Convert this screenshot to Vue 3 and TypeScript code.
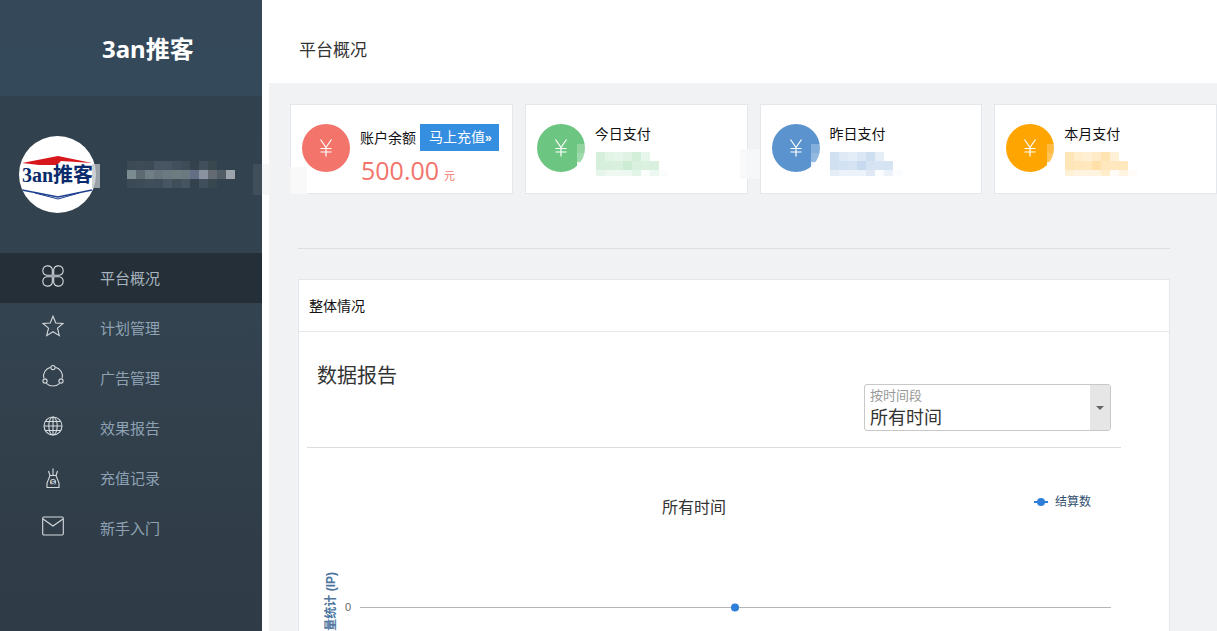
<script setup lang="ts">
interface Cell {
  x: number;
  y: number;
  w: number;
  h: number;
  color: string;
}

interface StatCard {
  label: string;
  color: string;
  amount?: string;
}

const navItems = ['平台概况', '计划管理', '广告管理', '效果报告', '充值记录', '新手入门'];

const cards: StatCard[] = [
  { label: '账户余额', color: '#f2746b', amount: '500.00' },
  { label: '今日支付', color: '#6cc681' },
  { label: '昨日支付', color: '#5b93cf' },
  { label: '本月支付', color: '#ffa502' }
];

// 打码区域：按页面坐标铺马赛克
const CELL = 9;
const pattern = [
  [0.28, 0.2, 0.17, 0.22, 0.3, 0.16],
  [0.28, 0.27, 0.26, 0.34, 0.26, 0.25, 0.26],
  [0.16, 0.12, 0.12, 0.12, 0.2, 0.03, 0.12, 0.03]
];

function blur(left: number, top: number, rgb: string): Cell[] {
  const out: Cell[] = [];
  pattern.forEach((row, r) => {
    row.forEach((a, c) => {
      out.push({
        x: left + c * CELL,
        y: top + r * CELL,
        w: CELL,
        h: r === 2 ? 6 : CELL,
        color: `rgba(${rgb},${a})`
      });
    });
  });
  return out;
}

function edge(left: number): Cell[] {
  return [
    { x: left, y: 144, w: 9, h: 9, color: 'rgba(255,255,255,0.25)' },
    { x: left, y: 153, w: 9, h: 9, color: 'rgba(255,255,255,0.35)' },
    { x: left, y: 162, w: 9, h: 9, color: 'rgba(255,255,255,0.88)' }
  ];
}

const nameRows = [
  ['#3b4a55', '#3e4c58', '#3c4a56', '#475562', '#475562', '#424f5c', '#3e4c58', '#34424e', '#414f5c', '#39474f'],
  ['#7a8c90', '#5e6a72', '#6f7d85', '#68757f', '#6a7a80', '#6e7c80', '#6a7a80', '#646f85', '#8b929f', '#646a72', '#515c66', '#9ea4ab'],
  ['#3b4a55', '#3e4c58', '#414f5a', '#3f4d5a', '#475662', '#404e5a', '#46545f', '#34424e', '#414f5c', '#39474f']
];

const nameCells: Cell[] = nameRows.flatMap((row, r) =>
  row.map((color, c) => ({ x: 127 + c * CELL, y: 161 + r * CELL, w: CELL, h: CELL, color }))
);

const cells: Cell[] = [
  ...nameCells,
  { x: 92, y: 164, w: 8, h: 24, color: 'rgba(190,195,198,0.75)' },
  { x: 253, y: 164, w: 9, h: 31, color: 'rgba(255,255,255,0.07)' },
  { x: 262, y: 164, w: 8, h: 31, color: 'rgba(245,245,245,0.9)' },
  { x: 290, y: 167, w: 17, h: 27, color: 'rgba(248,248,248,0.9)' },
  { x: 740, y: 149, w: 8, h: 30, color: 'rgba(248,248,248,0.9)' },
  { x: 748, y: 149, w: 12, h: 30, color: 'rgba(250,250,250,0.6)' },
  ...edge(577),
  ...blur(596, 152, '108,198,129'),
  ...edge(811),
  ...blur(830, 152, '91,147,207'),
  ...edge(1047),
  ...blur(1065, 152, '255,165,2')
];
</script>

<template>
  <div class="page">
    <aside class="sidebar">
      <div class="brand">3an推客</div>
      <div class="profile">
        <div class="avatar">
          <svg width="77" height="77" viewBox="0 0 77 77">
            <path d="M3 27 L39 20 L73 27 L42 25 L38 29 L20 29 Z" fill="#d8171c" />
            <text x="3" y="46" class="logo-text">3an推客</text>
            <path d="M3 54 L39 61 L73 54" fill="none" stroke="#1d3f8f" stroke-width="1.4" />
            <path d="M16 57 L39 63 L60 57" fill="none" stroke="#1d3f8f" stroke-width="1" />
          </svg>
        </div>
      </div>
      <nav>
        <a v-for="(item, i) in navItems" :key="item" class="nav-item" :class="{ active: i === 0 }">
          <svg class="nav-icon" width="22" height="22" viewBox="0 0 22 22">
            <g v-if="i === 0">
              <path d="M10.3 10.3H4.5A4.8 4.8 0 1 1 10.3 4.5Z" />
              <path d="M11.7 10.3H17.5A4.8 4.8 0 1 0 11.7 4.5Z" />
              <path d="M10.3 11.7H4.5A4.8 4.8 0 1 0 10.3 17.5Z" />
              <path d="M11.7 11.7H17.5A4.8 4.8 0 1 1 11.7 17.5Z" />
            </g>
            <path v-else-if="i === 1" d="M11 1.2 L13.8 8 L21 8.5 L15.5 13.2 L17.3 20.6 L11 16.7 L4.7 20.6 L6.5 13.2 L1 8.5 L8.2 8Z" />
            <g v-else-if="i === 2">
              <path d="M13.4 2.2A9.3 9.3 0 0 1 20.2 13.2M17.6 18.3A9.3 9.3 0 0 1 4.4 18.3M1.8 13.2A9.3 9.3 0 0 1 8.6 2.2" />
              <circle cx="11" cy="2.6" r="2.1" />
              <circle cx="3" cy="16" r="2.1" />
              <circle cx="19" cy="16" r="2.1" />
            </g>
            <g v-else-if="i === 3">
              <circle cx="11" cy="11" r="9" />
              <ellipse cx="11" cy="11" rx="4.2" ry="9" />
              <path d="M11 2V20M2 11H20M3.2 6.5H18.8M3.2 15.5H18.8" />
            </g>
            <g v-else-if="i === 4" transform="translate(0 3)">
              <path d="M8 7.5 L6.5 3 M11 7.5 V0.5 M14 7.5 L15.5 3" />
              <path d="M8 7.5 H14 L17 15 V19.5 H5 V15 Z" />
              <circle cx="11" cy="14" r="3" class="bag-dot" />
              <text x="11" y="16.6" class="bag-text">$</text>
            </g>
            <g v-else>
              <rect x="0.7" y="2" width="20.6" height="18" rx="1.2" />
              <path d="M1 4 L11 11 L21 4" />
            </g>
          </svg>
          <span>{{ item }}</span>
        </a>
      </nav>
    </aside>

    <main class="main">
      <header class="topbar">平台概况</header>
      <div class="content">
        <section class="cards">
          <div v-for="card in cards" :key="card.label" class="card">
            <div class="coin" :style="{ background: card.color }">
              <svg width="14" height="18" viewBox="0 0 14 18">
                <path d="M1.5 0.5 L7 8.5 L12.5 0.5 M7 8.5 V17.5 M1.5 9.5 H12.5 M1.5 13 H12.5" />
              </svg>
            </div>
            <div v-if="card.amount" class="info">
              <div class="balance-row">
                <span>{{ card.label }}</span>
                <a class="recharge">马上充值<b>»</b></a>
              </div>
              <div class="amount" :style="{ color: card.color }">{{ card.amount }}<small>元</small></div>
            </div>
            <div v-else class="info plain">{{ card.label }}</div>
          </div>
        </section>

        <div class="divider"></div>

        <section class="panel">
          <div class="panel-head">整体情况</div>
          <div class="panel-body">
            <div class="report-head">
              <h2>数据报告</h2>
              <div class="range-select">
                <div class="range-text">
                  <span class="range-label">按时间段</span>
                  <span class="range-value">所有时间</span>
                </div>
                <div class="range-arrow"></div>
              </div>
            </div>
            <div class="rule"></div>
            <svg class="chart" width="814" height="220" viewBox="0 0 814 220">
              <text x="387" y="65" class="chart-title">所有时间</text>
              <path d="M727 54H741" stroke="#2f7ed8" stroke-width="2" />
              <circle cx="734" cy="54" r="4" fill="#2f7ed8" />
              <text x="748" y="58" class="legend">结算数</text>
              <text x="28" y="124" transform="rotate(-90 28 124)" class="axis-title">流量统计 (IP)</text>
              <text x="41" y="163" class="axis-label">0</text>
              <path d="M53 159.5H804" stroke="#b4b4b4" stroke-width="1" />
              <circle cx="428" cy="159.5" r="4" fill="#2f7ed8" />
            </svg>
          </div>
        </section>
      </div>
    </main>

    <div class="redact">
      <i
        v-for="(c, i) in cells"
        :key="i"
        :style="{ left: c.x + 'px', top: c.y + 'px', width: c.w + 'px', height: c.h + 'px', background: c.color }"
      ></i>
    </div>
  </div>
</template>

<style>
html,
body {
  margin: 0;
  overflow: hidden;
}
</style>

<style scoped>
.page {
  position: relative;
  display: flex;
  width: 1217px;
  height: 631px;
  overflow: hidden;
  background: #fff;
  font-family: "Liberation Sans", "Noto Sans CJK SC", sans-serif;
  color: #222;
}

.sidebar {
  flex: 0 0 262px;
  background: linear-gradient(180deg, #30404d 0%, #33434f 50%, #2f3b46 100%);
}

.brand {
  height: 96px;
  box-sizing: border-box;
  padding: 32px 0 0 102px;
  background: linear-gradient(180deg, #344859, #34495a);
  color: #fff;
  font-family: "Noto Sans", "Noto Sans CJK SC", sans-serif;
  font-size: 24px;
  font-weight: 700;
  line-height: 34px;
}

.profile {
  display: flex;
  align-items: center;
  height: 157px;
  box-sizing: border-box;
  padding: 5px 0 5px 19px;
}

.avatar {
  width: 77px;
  height: 77px;
  border-radius: 50%;
  overflow: hidden;
  background: #fff;
}

.logo-text {
  fill: #0b2a6b;
  font-family: "Liberation Serif", "Noto Sans CJK SC", serif;
  font-size: 20px;
  font-weight: 700;
}

.nav-item {
  display: flex;
  align-items: center;
  height: 50px;
  box-sizing: border-box;
  padding-left: 42px;
  color: #8ea2b4;
  font-size: 15px;
}

.nav-item span {
  padding-bottom: 2px;
}

.nav-item.active {
  background: #242f38;
  color: #a9b5be;
}

.nav-icon {
  flex: none;
  margin: -4px 36px 0 0;
  overflow: visible;
  fill: none;
  stroke: #d5dadd;
  stroke-width: 1.1;
}

.bag-dot {
  fill: #d5dadd;
  stroke: none;
}

.bag-text {
  fill: #33434f;
  stroke: none;
  font-size: 7px;
  font-weight: 700;
  text-anchor: middle;
}

.main {
  flex: 1;
  min-width: 0;
}

.topbar {
  height: 83px;
  box-sizing: border-box;
  padding: 34px 0 0 37px;
  font-size: 17px;
  line-height: 34px;
  color: #333;
}

.content {
  height: 548px;
  margin-left: 7px;
  padding: 21px 0 0 21px;
  box-sizing: border-box;
  background: #f1f2f4;
}

.cards {
  display: flex;
  gap: 12px;
}

.card {
  flex: 1;
  display: flex;
  gap: 10px;
  height: 90px;
  box-sizing: border-box;
  padding: 19px 0 0 11px;
  border: 1px solid #e4e7eb;
  background: #fff;
}

.coin {
  flex: none;
  display: flex;
  align-items: center;
  justify-content: center;
  width: 48px;
  height: 48px;
  border-radius: 50%;
}

.coin svg {
  fill: none;
  stroke: #fff;
  stroke-width: 1.2;
}

.info {
  font-size: 14px;
  color: #111;
}

.info.plain {
  line-height: 20px;
}

.balance-row {
  display: flex;
  align-items: center;
  gap: 4px;
  height: 27px;
  padding-bottom: 1px;
  box-sizing: border-box;
}

.recharge {
  width: 79px;
  height: 27px;
  margin-top: 1px;
  box-sizing: border-box;
  padding-left: 9px;
  background: #368ee0;
  color: #fff;
  line-height: 27px;
}

.recharge b {
  font-size: 12px;
}

.amount {
  margin-top: 3px;
  padding-left: 1px;
  font-family: "Open Sans", "Liberation Sans", sans-serif;
  font-size: 25px;
  line-height: 32px;
}

.amount small {
  margin-left: 5px;
  font-family: "Noto Sans CJK SC", sans-serif;
  font-size: 11px;
}

.divider {
  width: 872px;
  height: 1px;
  margin: 54px 0 30px 8px;
  background: #dcdee0;
}

.panel {
  width: 872px;
  margin-left: 8px;
  box-sizing: border-box;
  border: 1px solid #e4e7eb;
  background: #fff;
}

.panel-head {
  height: 52px;
  box-sizing: border-box;
  padding-left: 10px;
  border-bottom: 1px solid #e4e7eb;
  font-size: 14px;
  line-height: 52px;
  color: #111;
}

.panel-body {
  padding-left: 8px;
}

.report-head {
  display: flex;
  justify-content: space-between;
  width: 804px;
  padding: 30px 0 16px 10px;
  box-sizing: border-box;
}

.report-head h2 {
  margin: 0;
  font-size: 20px;
  font-weight: 400;
  line-height: 28px;
  color: #333;
}

.range-select {
  display: flex;
  justify-content: space-between;
  width: 247px;
  height: 47px;
  margin-top: 22px;
  box-sizing: border-box;
  border: 1px solid #c8c8c8;
  border-radius: 3px;
  overflow: hidden;
}

.range-text {
  display: flex;
  flex-direction: column;
  padding: 3px 0 0 5px;
}

.range-label {
  font-size: 13px;
  line-height: 15px;
  color: #999;
}

.range-value {
  margin-top: 3px;
  font-size: 18px;
  line-height: 24px;
  color: #333;
}

.range-arrow {
  display: flex;
  align-items: center;
  justify-content: center;
  width: 20px;
  background: #e6e6e6;
}

.range-arrow::after {
  content: "";
  border: 4px solid transparent;
  border-top: 4px solid #666;
  margin-top: 4px;
}

.rule {
  width: 814px;
  height: 1px;
  background: #dcdcdc;
}

.chart {
  display: block;
}

.chart-title {
  fill: #333;
  font-size: 16px;
  text-anchor: middle;
}

.legend {
  fill: #33506e;
  font-size: 12px;
}

.axis-title {
  fill: #4d759e;
  font-size: 12px;
  font-weight: 700;
  text-anchor: end;
}

.axis-label {
  fill: #666;
  font-size: 11px;
  text-anchor: middle;
}

.redact {
  position: absolute;
  inset: 0;
  pointer-events: none;
}

.redact i {
  position: absolute;
}
</style>
